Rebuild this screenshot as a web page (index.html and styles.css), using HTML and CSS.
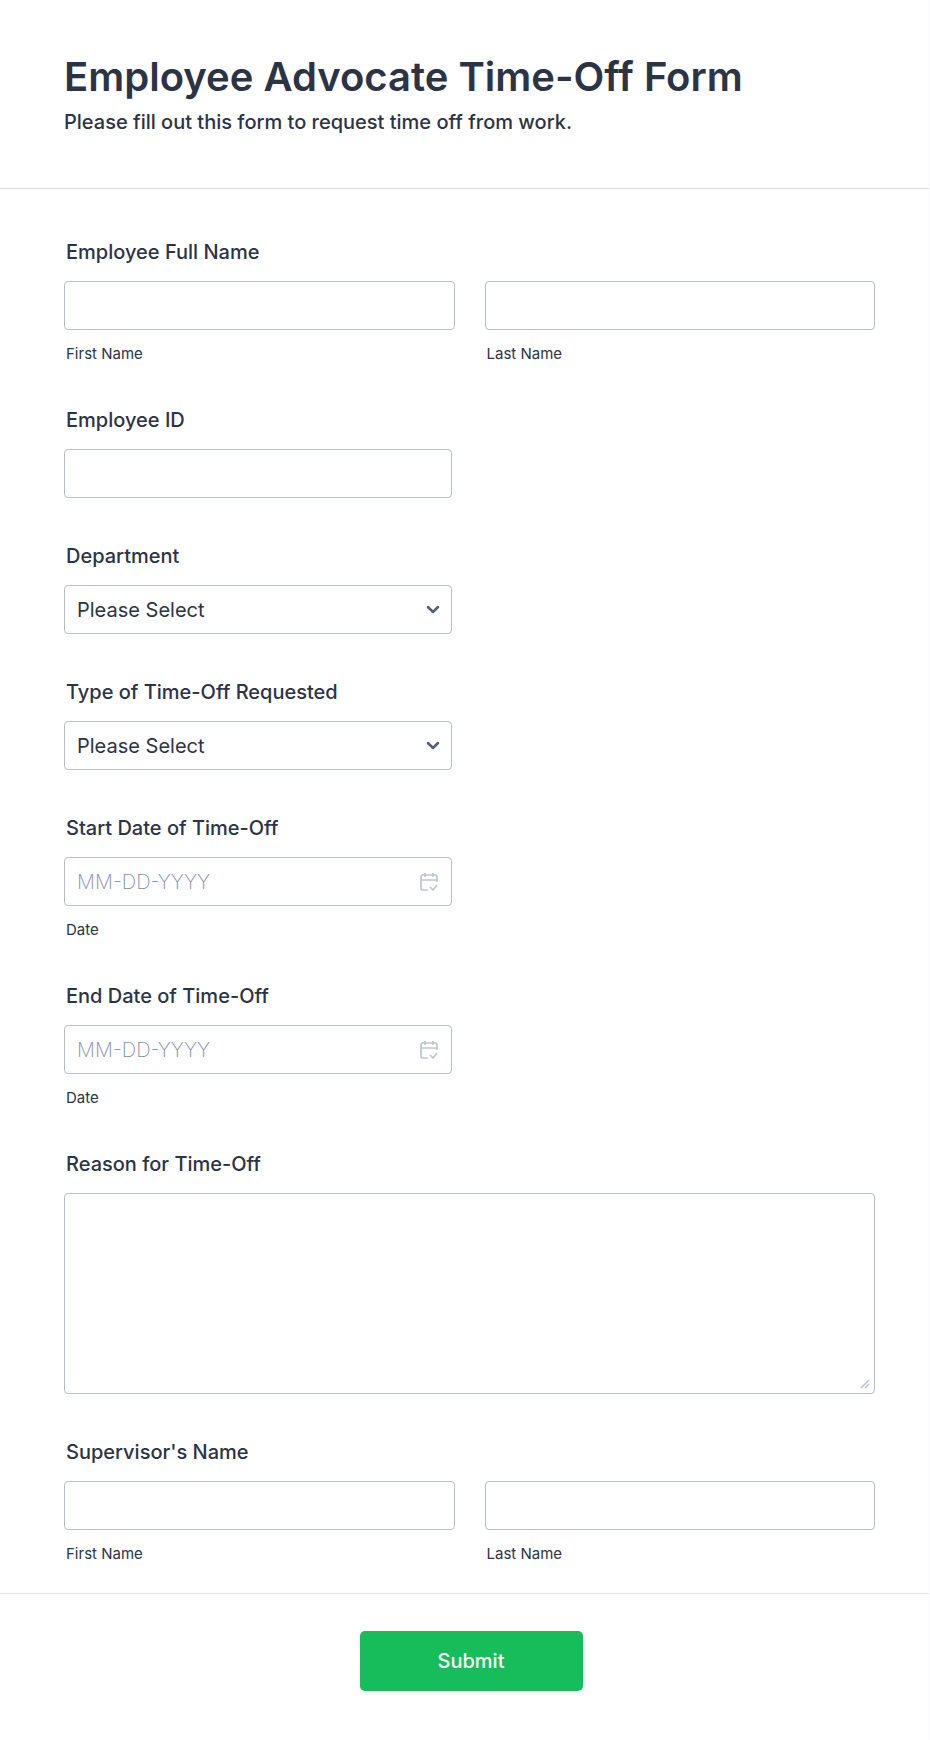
FILE: index.html
```html
<!DOCTYPE html>
<html lang="en">
<head>
  <meta charset="UTF-8">
  <meta name="viewport" content="width=device-width, initial-scale=1.0">
  <title>Employee Advocate Time-Off Form</title>
  <link rel="stylesheet" href="styles.css">
</head>
<body>
  <form class="form">
    <header class="form-header">
      <h1>Employee Advocate Time-Off Form</h1>
      <p>Please fill out this form to request time off from work.</p>
    </header>

    <div class="form-fields">
      <div class="field" role="group" aria-labelledby="employeeName">
        <div class="label" id="employeeName">Employee Full Name</div>
        <div class="name-row">
          <div class="name-part">
            <input class="control" type="text" id="employeeFirst">
            <label class="sublabel" for="employeeFirst">First Name</label>
          </div>
          <div class="name-part">
            <input class="control" type="text" id="employeeLast">
            <label class="sublabel" for="employeeLast">Last Name</label>
          </div>
        </div>
      </div>

      <div class="field">
        <label class="label" for="employeeId">Employee ID</label>
        <input class="control half" type="text" id="employeeId">
      </div>

      <div class="field">
        <label class="label" for="department">Department</label>
        <div class="control-wrap half">
          <select class="control" id="department">
            <option>Please Select</option>
          </select>
          <svg class="chevron" viewBox="0 0 14 10" aria-hidden="true"><path d="M2 2l5 5 5-5"/></svg>
        </div>
      </div>

      <div class="field">
        <label class="label" for="timeOffType">Type of Time-Off Requested</label>
        <div class="control-wrap half">
          <select class="control" id="timeOffType">
            <option>Please Select</option>
          </select>
          <svg class="chevron" viewBox="0 0 14 10" aria-hidden="true"><path d="M2 2l5 5 5-5"/></svg>
        </div>
      </div>

      <div class="field">
        <label class="label" for="startDate">Start Date of Time-Off</label>
        <div class="control-wrap half">
          <input class="control" type="text" id="startDate" placeholder="MM-DD-YYYY">
          <svg class="calendar" viewBox="0 0 18 20" aria-hidden="true"><path d="M8 18H3a2 2 0 0 1-2-2V5a2 2 0 0 1 2-2h12a2 2 0 0 1 2 2v5M1 8h16M5 1v4M13 1v4M10 15l3 3 4-5"/></svg>
        </div>
        <label class="sublabel" for="startDate">Date</label>
      </div>

      <div class="field">
        <label class="label" for="endDate">End Date of Time-Off</label>
        <div class="control-wrap half">
          <input class="control" type="text" id="endDate" placeholder="MM-DD-YYYY">
          <svg class="calendar" viewBox="0 0 18 20" aria-hidden="true"><path d="M8 18H3a2 2 0 0 1-2-2V5a2 2 0 0 1 2-2h12a2 2 0 0 1 2 2v5M1 8h16M5 1v4M13 1v4M10 15l3 3 4-5"/></svg>
        </div>
        <label class="sublabel" for="endDate">Date</label>
      </div>

      <div class="field">
        <label class="label" for="reason">Reason for Time-Off</label>
        <div class="control-wrap">
          <textarea class="control" id="reason"></textarea>
          <svg class="grip" viewBox="0 0 10 10" aria-hidden="true"><path d="M1 9l8-8M5 9l4-4"/></svg>
        </div>
      </div>

      <div class="field" role="group" aria-labelledby="supervisorName">
        <div class="label" id="supervisorName">Supervisor's Name</div>
        <div class="name-row">
          <div class="name-part">
            <input class="control" type="text" id="supervisorFirst">
            <label class="sublabel" for="supervisorFirst">First Name</label>
          </div>
          <div class="name-part">
            <input class="control" type="text" id="supervisorLast">
            <label class="sublabel" for="supervisorLast">Last Name</label>
          </div>
        </div>
      </div>
    </div>

    <footer class="form-footer">
      <button class="submit" type="submit">Submit</button>
    </footer>
  </form>
</body>
</html>
```
FILE: styles.css
```css
* {
  box-sizing: border-box;
}

body {
  margin: 0;
  background-color: #fff;
  color: #2c3345;
  font-family: Inter, "Liberation Sans", sans-serif;
}

.form {
  min-height: 100vh;
  border-right: 1px solid #f9f9fd;
}

.form-header {
  padding: 52px 54px 54px 64px;
  border-bottom: 1px solid #d7d8e1;
}

h1 {
  margin: 0;
  font-size: 40px;
  line-height: 50px;
  font-weight: 600;
}

p {
  margin: 8px 0 0;
  font-size: 20px;
  line-height: 24px;
  font-weight: 500;
}

.form-fields {
  display: flex;
  flex-direction: column;
  gap: 46px;
  padding: 51px 54px 31px 64px;
}

.label {
  display: block;
  margin-bottom: 17px;
  padding-left: 2px;
  font-size: 20px;
  line-height: 24px;
  font-weight: 500;
}

.name-row {
  display: flex;
  gap: 30px;
}

.name-part {
  flex: 1;
}

.control {
  display: block;
  width: 100%;
  height: 49px;
  margin: 0;
  padding: 0 12px;
  border: 1px solid #b8bdc9;
  border-radius: 4px;
  background-color: #fff;
  color: #2c3345;
  font-family: inherit;
  font-size: 20px;
  appearance: none;
}

.control::placeholder {
  color: #7d90a7;
  font-weight: 200;
  opacity: 1;
}

.half {
  width: calc(50% - 18px);
}

.control-wrap {
  position: relative;
}

textarea.control {
  height: 201px;
  padding: 12px;
  resize: none;
}

.sublabel {
  display: block;
  margin-top: 16px;
  padding-left: 2px;
  font-size: 15px;
  line-height: 16px;
}

.chevron,
.calendar,
.grip {
  position: absolute;
  fill: none;
  pointer-events: none;
}

.chevron {
  top: 20px;
  right: 12px;
  width: 14px;
  height: 10px;
  stroke: #57607a;
  stroke-width: 2.5;
  stroke-linecap: round;
  stroke-linejoin: round;
}

.calendar {
  top: 15px;
  right: 14px;
  width: 18px;
  height: 20px;
  stroke: #c0c5d2;
  stroke-width: 1.7;
}

.grip {
  right: 5px;
  bottom: 5px;
  width: 10px;
  height: 10px;
  stroke: #b8bdc9;
  stroke-width: 1.5;
}

.form-footer {
  display: flex;
  justify-content: center;
  padding: 37px 51px 46px 64px;
  border-top: 1px solid #e4e5ef;
}

.submit {
  width: 223px;
  height: 60px;
  border: 0;
  border-radius: 5px;
  background-color: #18bd5b;
  color: #fff;
  font-family: inherit;
  font-size: 20px;
  font-weight: 500;
  cursor: pointer;
}
```
